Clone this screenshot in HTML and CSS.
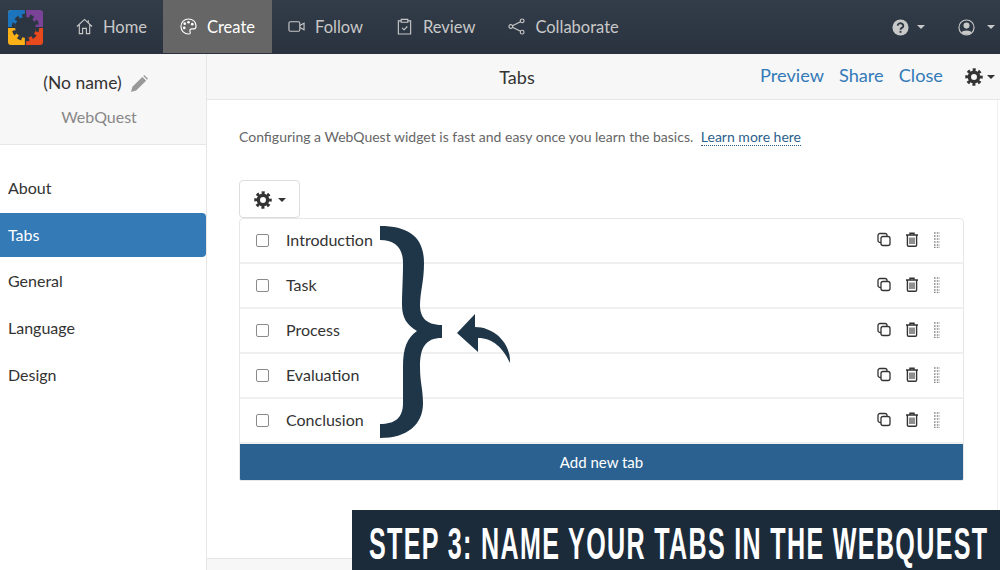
FILE: index.html
```html
<html>

<head>
    <link rel="stylesheet" href="styles.css">
</head>

<body>
    <svg class="defs" width="0" height="0">
        <defs>
            <symbol id="gear" viewBox="0 0 20 20">
                <circle cx="10" cy="10" r="5.2" fill="none" stroke="currentColor" stroke-width="3.8" />
                <circle cx="10" cy="10" r="8" fill="none" stroke="currentColor" stroke-width="3.4"
                    stroke-dasharray="3.3 2.98" stroke-dashoffset="1.65" />
            </symbol>
            <symbol id="copy" viewBox="0 0 14 14">
                <rect x="1" y="1" width="9" height="9" rx="2" fill="none" stroke="currentColor" stroke-width="1.3" />
                <rect x="4" y="4" width="9" height="9" rx="2" fill="#fff" stroke="currentColor" stroke-width="1.3" />
            </symbol>
            <symbol id="trash" viewBox="0 0 14 15">
                <path d="M1 3h12M5 3V1.2h4V3M2.4 3v10a1.2 1.2 0 0 0 1.2 1.2h6.8a1.2 1.2 0 0 0 1.2-1.2V3" fill="none"
                    stroke="currentColor" stroke-width="1.4" />
                <path d="M5 5.5v6.5M7 5.5v6.5M9 5.5v6.5" fill="none" stroke="currentColor" stroke-width="1.1" />
            </symbol>
            <symbol id="grip" viewBox="0 0 6 16">
                <path d="M0 1h6M0 4h6M0 7h6M0 10h6M0 13h6M0 15.5h6" fill="none" stroke="currentColor"
                    stroke-width="1.6" stroke-dasharray="1.6 1.2" />
            </symbol>
        </defs>
    </svg>

    <header class="topbar">
        <svg class="logo" viewBox="0 0 35 35">
            <path d="M3 0h14v35H3a3 3 0 0 1-3-3V3a3 3 0 0 1 3-3z" fill="#fbb016" />
            <path d="M0 3a3 3 0 0 1 3-3h14v17.500H0z" fill="#1c75bc" />
            <path d="M17.500 0H32a3 3 0 0 1 3 3v14.500H17.500z" fill="#7b4397" />
            <path d="M17.500 17.500H35V32a3 3 0 0 1-3 3H17.500z" fill="#e8491d" />
            <path d="M17.500 0v35M0 17.500h35" stroke="#2c3542" stroke-width="1.200" />
            <circle cx="17.500" cy="17.500" r="10.500" fill="#2c3542" />
            <circle cx="17.500" cy="17.500" r="12" fill="none" stroke="#2c3542" stroke-width="3.500"
                stroke-dasharray="4.200 3.340" />
        </svg>
        <nav class="nav">
            <a class="nav-item">
                <svg class="nav-icon" viewBox="0 0 18 18">
                    <path d="M1 9l8-7.500L17 9M3.500 7v9.500h3.500v-5.500h4v5.500h3.500V7M13 2.500v3" />
                </svg>
                Home
            </a>
            <a class="nav-item active">
                <svg class="nav-icon" viewBox="0 0 18 18">
                    <path d="M9 1a8 8 0 1 0 0 16c2.500 0 2-2 1.500-3s.5-2.500 2-2.500h2.500c1.500 0 2-1.500 2-3C17 4 13.500 1 9 1z" />
                    <circle class="dot" cx="5" cy="6" r="1.400" />
                    <circle class="dot" cx="9" cy="4.500" r="1.400" />
                    <circle class="dot" cx="13" cy="6.500" r="1.400" />
                    <circle class="dot" cx="4.500" cy="10.500" r="1.400" />
                </svg>
                Create
            </a>
            <a class="nav-item">
                <svg class="nav-icon" viewBox="0 0 18 18">
                    <rect x="1" y="4" width="11.500" height="10" rx="1.500" />
                    <path d="M12.500 8l4.500-2.500v7L12.500 10" />
                </svg>
                Follow
            </a>
            <a class="nav-item">
                <svg class="nav-icon" viewBox="0 0 18 18">
                    <path d="M5.500 3H2.500v14h13V3h-3M5.500 1.500h7v3h-7zM6.500 10.500l2 2 3.500-3.500" />
                </svg>
                Review
            </a>
            <a class="nav-item">
                <svg class="nav-icon" viewBox="0 0 18 18">
                    <circle cx="3" cy="9" r="2" />
                    <circle cx="15" cy="3" r="2" />
                    <circle cx="15" cy="15" r="2" />
                    <path d="M4.800 8.100l8.400-4.200M4.800 9.900l8.400 4.200" />
                </svg>
                Collaborate
            </a>
        </nav>
        <div class="user-menu">
            <span class="menu-btn">
                <svg class="menu-icon" viewBox="0 0 18 18">
                    <circle cx="9" cy="9" r="8.500" fill="currentColor" />
                    <path d="M6 7a3 2.600 0 1 1 4.500 2.300C9.500 10 9 10.300 9 11.500" fill="none" stroke="#2c3542"
                        stroke-width="2" />
                    <rect x="8" y="12.600" width="2" height="2" fill="#2c3542" />
                </svg>
                <span class="caret"></span>
            </span>
            <span class="menu-btn user-btn">
                <svg class="menu-icon" viewBox="0 0 18 18">
                    <circle cx="9" cy="9" r="8" fill="none" stroke="currentColor" stroke-width="1.200" />
                    <circle cx="9" cy="7" r="3.200" fill="currentColor" />
                    <path d="M3.500 14.500C4.500 11.500 13.500 11.500 14.500 14.500A8 8 0 0 1 3.500 14.500z" fill="currentColor" />
                </svg>
                <span class="caret"></span>
            </span>
        </div>
    </header>

    <div class="main">
        <aside class="sidebar">
            <div class="side-head">
                <div class="widget-name">
                    (No name)
                    <svg class="pencil" viewBox="0 0 18 18">
                        <path d="M0 18l1.500-5.500L12 2l4 4L5.500 16.500zM13 1l1-1 4 4-1 1z" />
                    </svg>
                </div>
                <div class="widget-type">WebQuest</div>
            </div>
            <ul class="side-menu">
                <li>About</li>
                <li class="selected">Tabs</li>
                <li>General</li>
                <li>Language</li>
                <li>Design</li>
            </ul>
        </aside>

        <section class="content">
            <div class="titlebar">
                <div class="title">Tabs</div>
                <a class="action">Preview</a>
                <a class="action">Share</a>
                <a class="action">Close</a>
                <span class="settings">
                    <svg class="gear"><use href="#gear" /></svg>
                    <span class="caret"></span>
                </span>
            </div>
            <div class="panel">
                <p class="intro">Configuring a WebQuest widget is fast and easy once you learn the basics. <a
                        class="learn">Learn more here</a></p>
                <button class="gear-btn">
                    <svg class="gear"><use href="#gear" /></svg>
                    <span class="caret"></span>
                </button>
                <div class="tab-list">
                    <div class="tab-row">
                        <span class="check"></span><span class="tab-name">Introduction</span>
                        <svg class="act"><use href="#copy" /></svg><svg class="act"><use href="#trash" /></svg><svg class="grip"><use href="#grip" /></svg>
                    </div>
                    <div class="tab-row">
                        <span class="check"></span><span class="tab-name">Task</span>
                        <svg class="act"><use href="#copy" /></svg><svg class="act"><use href="#trash" /></svg><svg class="grip"><use href="#grip" /></svg>
                    </div>
                    <div class="tab-row">
                        <span class="check"></span><span class="tab-name">Process</span>
                        <svg class="act"><use href="#copy" /></svg><svg class="act"><use href="#trash" /></svg><svg class="grip"><use href="#grip" /></svg>
                    </div>
                    <div class="tab-row">
                        <span class="check"></span><span class="tab-name">Evaluation</span>
                        <svg class="act"><use href="#copy" /></svg><svg class="act"><use href="#trash" /></svg><svg class="grip"><use href="#grip" /></svg>
                    </div>
                    <div class="tab-row">
                        <span class="check"></span><span class="tab-name">Conclusion</span>
                        <svg class="act"><use href="#copy" /></svg><svg class="act"><use href="#trash" /></svg><svg class="grip"><use href="#grip" /></svg>
                    </div>
                    <div class="add-tab">Add new tab</div>
                </div>
            </div>
            <div class="foot"></div>
        </section>
    </div>

    <!-- brace and arrow lie over the list -->
    <svg class="brace" viewBox="0 0 140 220">
        <path d="M5 6C35 6 49 18 49 43C49 62 45 72 45 85C45 96 50 105 67 105V118C50 118 45 128 45 147C45 162 48 170 48 183C48 205 32 218 5 218V204C20 204 28 198 28 183C28 170 28 160 28 147C28 128 32 118 42 111C32 105 27 98 27 85C27 72 28 60 28 43C28 28 20 20 5 20Z" />
        <path d="M82 113L100 94L100 107C118 107 136 122 135 143C128 128 118 118 103 118L103 132Z" />
    </svg>

    <div class="banner"><span class="banner-text">STEP 3: NAME YOUR TABS IN THE WEBQUEST</span></div>
</body>

</html>
```

FILE: styles.css
```css
* {
    box-sizing: border-box;
}

html,
body {
    margin: 0;
    padding: 0;
    height: 570px;
    overflow: hidden;
    background-color: white;
    font-family: Lato, "Open Sans", sans-serif;
    color: #333333;
}

.defs {
    position: absolute;
}

/* ヘッダー */
.topbar {
    display: flex;
    align-items: center;
    height: 54px;
    background: linear-gradient(#323d49, #2a323f);
    color: #c8c8c8;
}

.logo {
    width: 35px;
    height: 35px;
    margin-left: 8px;
    flex: none;
}

.nav {
    display: flex;
    height: 54px;
    margin-left: 17px;
}

.nav-item {
    display: flex;
    align-items: center;
    gap: 10px;
    height: 53px;
    padding: 0 16.500px;
    font-size: 16.500px;
}

.nav-item:first-child {
    padding-left: 16px;
}

.nav-item.active {
    background-color: #666666;
    color: white;
}

.nav-icon {
    width: 17px;
    height: 17px;
    fill: none;
    stroke: currentColor;
    stroke-width: 1.2;
}

.nav-icon .dot {
    fill: currentColor;
    stroke: none;
}

.user-menu {
    display: flex;
    gap: 33px;
    margin-left: auto;
    margin-right: 5px;
}

.menu-btn {
    display: flex;
    align-items: center;
    gap: 8px;
}

.user-btn {
    gap: 12px;
}

.menu-icon {
    width: 17px;
    height: 17px;
}

.caret {
    display: inline-block;
    border-top: 4px solid currentColor;
    border-left: 4px solid transparent;
    border-right: 4px solid transparent;
}

/* メイン */
.main {
    display: flex;
    height: 516px;
}

.sidebar {
    width: 207px;
    flex: none;
    border-right: 1px solid #e7e7e7;
}

.side-head {
    height: 91px;
    padding-top: 17px;
    background-color: #f7f7f7;
    border-bottom: 1px solid #e7e7e7;
    text-align: center;
}

.widget-name {
    display: flex;
    justify-content: center;
    gap: 9px;
    padding-right: 15px;
    font-size: 17.500px;
    line-height: 24px;
}

.pencil {
    width: 17px;
    height: 17px;
    margin-top: 4px;
    fill: #999999;
}

.widget-type {
    margin-top: 11px;
    padding-right: 8px;
    font-size: 16px;
    line-height: 22px;
    color: #888888;
}

.side-menu {
    list-style: none;
    margin: 21px 0 0 0;
    padding: 0;
}

.side-menu li {
    height: 44px;
    margin-bottom: 3px;
    padding-left: 8px;
    font-size: 16px;
    line-height: 44px;
}

.side-menu .selected {
    margin-bottom: 2px;
    background-color: #337ab7;
    border-radius: 0 4px 4px 0;
    color: white;
}

.content {
    flex: 1;
}

.titlebar {
    display: flex;
    align-items: center;
    height: 46px;
    background-color: #f7f7f7;
    border-bottom: 1px solid #e7e7e7;
}

.title {
    width: 553px;
    text-align: center;
    padding-left: 67px;
    font-size: 18px;
}

.action {
    margin-right: 15px;
    padding-bottom: 3px;
    font-size: 18.200px;
    color: #337ab7;
}

.settings {
    display: flex;
    align-items: center;
    gap: 4px;
    margin-left: 7px;
}

.gear {
    width: 18px;
    height: 18px;
}

.panel {
    height: 458px;
    margin-right: 2px;
    padding: 27px 0 0 32px;
    border-right: 1px solid #f0f0f0;
}

.foot {
    height: 12px;
    background-color: #f7f7f7;
    border-top: 1px solid #e7e7e7;
}

.intro {
    margin: 0;
    font-size: 14px;
    line-height: 20px;
    color: #666666;
}

.learn {
    margin-left: 4px;
    color: #2b5f8c;
    border-bottom: 1px dotted #2b5f8c;
}

.gear-btn {
    display: flex;
    align-items: center;
    gap: 6px;
    height: 38px;
    width: 61px;
    margin-top: 33px;
    padding: 2px 0 0 14px;
    background-color: white;
    border: 1px solid #dddddd;
    border-radius: 4px;
    color: #333333;
}

.tab-list {
    width: 725px;
    border: 1px solid #e7e7e7;
    border-radius: 4px 4px 2px 2px;
    overflow: hidden;
}

.tab-row {
    display: flex;
    align-items: center;
    height: 45px;
    padding: 0 0 0 16px;
    border-bottom: 2px solid #f0f0f0;
}

.check {
    width: 13px;
    height: 13px;
    border: 1px solid #8a8a8a;
    border-radius: 2px;
}

.tab-name {
    flex: 1;
    margin-left: 17px;
    padding-bottom: 2px;
    font-size: 16px;
}

.act {
    width: 14px;
    height: 15px;
    margin-right: 14px;
    margin-bottom: 2px;
    color: #333333;
}

.act + .act {
    margin-right: 15px;
}

.grip {
    width: 6px;
    height: 16px;
    margin-right: 23px;
    margin-bottom: 2px;
    color: #888888;
}

.add-tab {
    height: 36px;
    background-color: #2a6191;
    color: white;
    text-align: center;
    font-size: 15px;
    line-height: 36px;
}

/* 上に重ねる部分 */
.brace {
    position: absolute;
    left: 375px;
    top: 220px;
    width: 140px;
    height: 220px;
    fill: #1f3649;
}

.banner {
    position: absolute;
    left: 352px;
    top: 510px;
    width: 648px;
    height: 60px;
    padding-left: 17px;
    background-color: #1c2b3a;
    overflow: hidden;
}

.banner-text {
    display: block;
    width: 1090px;
    transform: scaleX(0.57);
    transform-origin: left;
    font-family: "Liberation Sans Narrow", "Liberation Sans", sans-serif;
    font-weight: bold;
    font-size: 44px;
    line-height: 68px;
    letter-spacing: 2.350px;
    color: white;
    white-space: nowrap;
}
```
